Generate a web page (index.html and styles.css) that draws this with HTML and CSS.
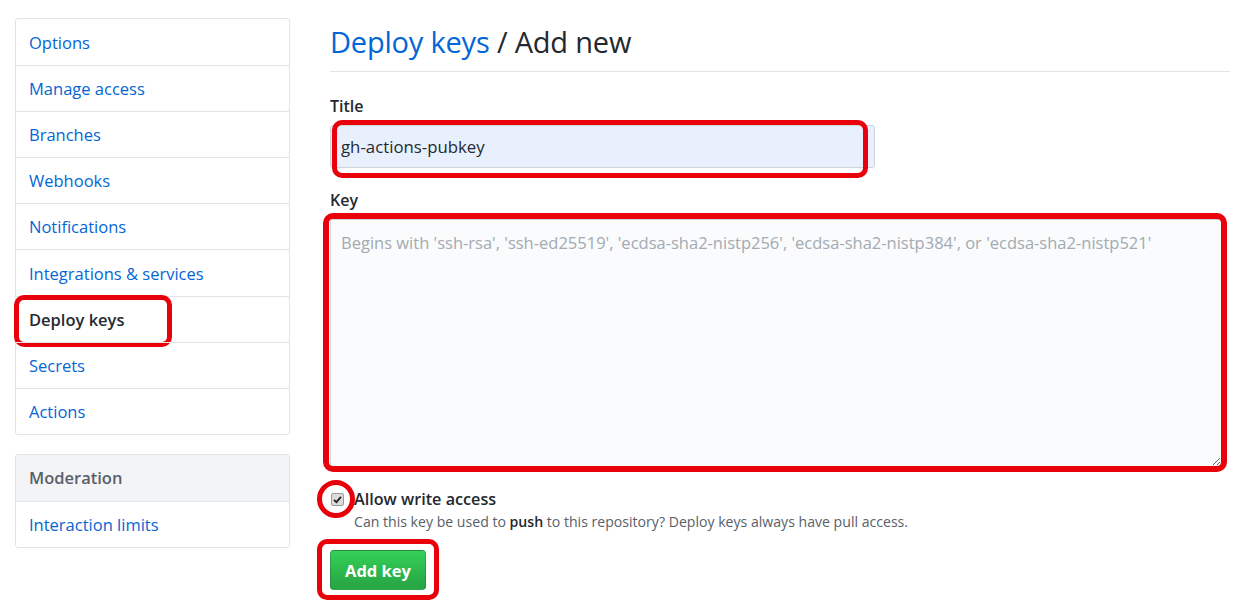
FILE: index.html
```html
<!DOCTYPE html>
<html>
<head>
<meta charset="utf-8">
<link rel="stylesheet" href="styles.css">
</head>
<body>
<div class="page">
  <aside class="side">
    <nav class="menu">
      <a class="menu-item">Options</a>
      <a class="menu-item">Manage access</a>
      <a class="menu-item">Branches</a>
      <a class="menu-item">Webhooks</a>
      <a class="menu-item">Notifications</a>
      <a class="menu-item">Integrations &amp; services</a>
      <a class="menu-item selected"><span class="mark mark-side"></span>Deploy keys</a>
      <a class="menu-item">Secrets</a>
      <a class="menu-item">Actions</a>
    </nav>
    <nav class="menu">
      <div class="menu-head">Moderation</div>
      <a class="menu-item">Interaction limits</a>
    </nav>
  </aside>
  <main class="main">
    <h1 class="title"><span class="crumb">Deploy keys</span> / Add new</h1>
    <div class="field">
      <label class="label">Title</label>
      <div class="wrap">
        <input class="input" type="text" value="gh-actions-pubkey">
        <span class="mark mark-input"></span>
      </div>
    </div>
    <div class="field">
      <label class="label">Key</label>
      <div class="wrap">
        <textarea class="textarea" placeholder="Begins with 'ssh-rsa', 'ssh-ed25519', 'ecdsa-sha2-nistp256', 'ecdsa-sha2-nistp384', or 'ecdsa-sha2-nistp521'"></textarea>
        <span class="mark mark-area"></span>
      </div>
    </div>
    <div class="check">
      <div class="wrap box-wrap">
        <span class="cb"><svg viewBox="0 0 13 13" width="13" height="13"><path d="M3 6.8 L5.4 9.2 L10 3.8" fill="none" stroke="#222" stroke-width="1.8"/></svg></span>
        <span class="ring"></span>
      </div>
      <div class="check-text">
        <div class="check-label">Allow write access</div>
        <div class="note">Can this key be used to <b>push</b> to this repository? Deploy keys always have pull access.</div>
      </div>
    </div>
    <div class="wrap btn-wrap">
      <button class="btn">Add key</button>
      <span class="mark mark-btn"></span>
    </div>
  </main>
</div>
</body>
</html>
```
FILE: styles.css
```css
* { box-sizing: border-box; }
html, body { margin: 0; background: #fff; }
body {
  font-family: "Open Sans", "Noto Sans", "Liberation Sans", sans-serif;
  color: #24292e;
  width: 1249px;
  height: 609px;
  overflow: hidden;
}
.page {
  display: flex;
  gap: 40px;
  padding: 18px 0 0 15px;
}
.side {
  width: 275px;
  flex: none;
  display: flex;
  flex-direction: column;
  gap: 19px;
}
.menu {
  border: 1px solid #e1e4e8;
  border-radius: 3px;
  display: flex;
  flex-direction: column;
}
.menu-item, .menu-head {
  position: relative;
  display: flex;
  align-items: center;
  height: 46.1px;
  padding: 0 13px;
  font-size: 16.5px;
  color: #0366d6;
  border-top: 1px solid #e1e4e8;
}
.menu-item:first-child { border-top: none; }
.menu-item.selected { color: #24292e; font-weight: 600; }
.menu-head {
  background: #f3f4f6;
  color: #586069;
  font-weight: 600;
  border-top: none;
}
.main {
  width: 900px;
  flex: none;
}
.title {
  margin: 6px 0 0;
  padding-bottom: 11px;
  font-size: 29px;
  font-weight: 400;
  line-height: 36px;
  border-bottom: 1px solid #e1e4e8;
  letter-spacing: -0.2px;
}
.crumb { color: #0366d6; }
.field { margin-top: 24px; }
.field + .field { margin-top: 22px; }
.label {
  display: block;
  font-weight: 600;
  font-size: 16px;
  line-height: 20px;
  margin-bottom: 9px;
}
.wrap { position: relative; display: inline-block; vertical-align: top; }
.input {
  display: block;
  width: 545px;
  height: 43px;
  padding: 0 10px;
  font: inherit;
  font-size: 16.8px;
  color: #24292e;
  background: #e8f0fe;
  border: 1px solid #d1d5da;
  border-radius: 3px;
  outline: none;
}
.textarea {
  display: block;
  width: 892px;
  height: 248px;
  padding: 11px 10px;
  font: inherit;
  font-size: 16.5px;
  background: #fafbfc;
  border: 1px solid #d1d5da;
  border-radius: 3px;
  resize: vertical;
  outline: none;
}
.textarea::placeholder { color: #a3aab1; }
.mark {
  position: absolute;
  border: 5px solid #e8000b;
  border-radius: 10px;
  pointer-events: none;
}
.mark-side { left: -2px; top: -2px; width: 158px; height: 52px; }
.mark-input { left: 2px; top: -5px; right: 7px; bottom: -10px; }
.mark-area { left: -7px; top: -6px; right: -5px; bottom: -5px; border-width: 6px; }
.mark-btn { left: -13px; top: -11px; right: -13px; bottom: -10px; }
.check {
  display: flex;
  gap: 9px;
  margin-top: 21px;
}
.box-wrap { width: 14px; height: 14px; margin: 5px 0 0 1px; }
.cb {
  display: block;
  width: 13px;
  height: 13px;
  background: #dcdcdc;
  border: 1px solid #9a9a9a;
  border-radius: 2px;
  position: relative;
}
.cb svg { position: absolute; left: -1px; top: -1px; }
.ring {
  position: absolute;
  left: -14px;
  top: -13px;
  width: 38px;
  height: 38px;
  border: 5px solid #e8000b;
  border-radius: 50%;
}
.check-label {
  font-weight: 600;
  font-size: 16.2px;
  line-height: 22px;
}
.note {
  font-size: 14.1px;
  color: #586069;
  line-height: 20px;
  margin-top: 2px;
}
.note b { color: #24292e; font-weight: 600; }
.btn-wrap { margin-top: 18px; }
.btn {
  display: block;
  width: 96px;
  height: 40px;
  font: inherit;
  font-size: 16.5px;
  font-weight: 700;
  color: #fff;
  background: linear-gradient(#34d058, #28a745 90%);
  border: 1px solid rgba(27,31,35,.2);
  border-radius: 4px;
}
```
